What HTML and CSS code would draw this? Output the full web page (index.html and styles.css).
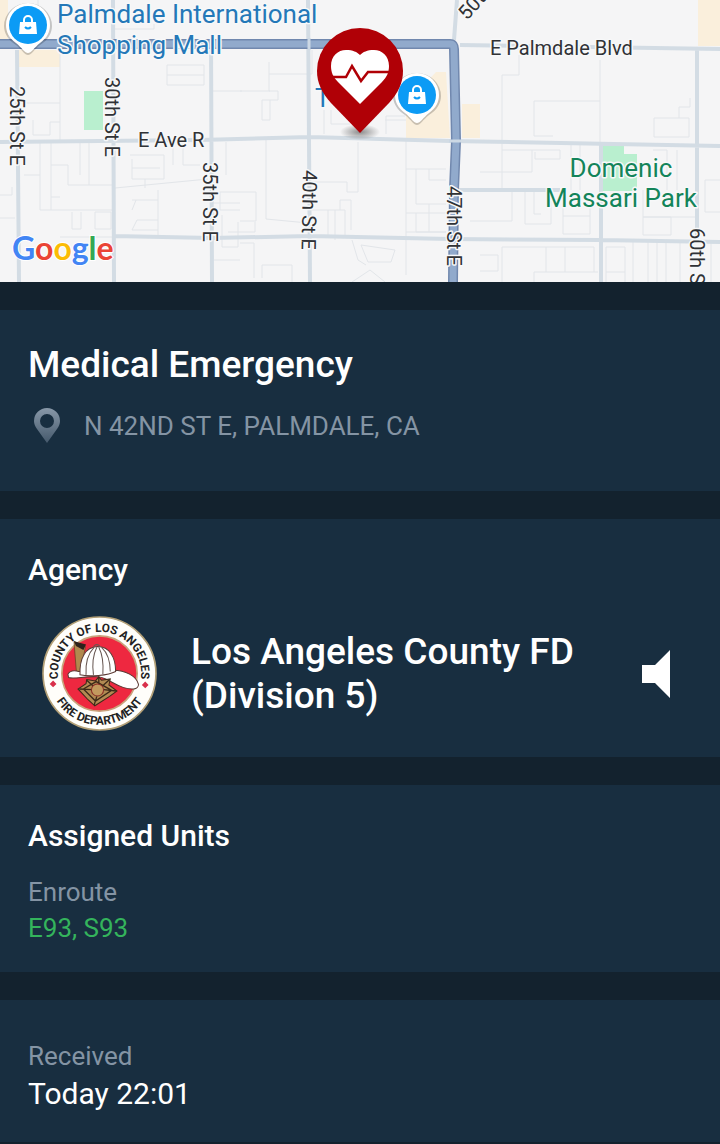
FILE: index.html
```html
<!DOCTYPE html>
<html lang="en">
<head>
<meta charset="utf-8">
<meta name="viewport" content="width=device-width, initial-scale=1">
<title>Medical Emergency</title>
<link rel="stylesheet" href="styles.css">
</head>
<body>
  <div class="map">
    <svg viewBox="0 0 720 282" role="img" aria-label="Map of the incident">
      <defs>
        <g id="shop-pin">
          <path class="pin-shadow" d="M0 30C-3 30 -6 25 -12 20C-20 15 -24 8 -24 1A24 23 0 0 1 24 1C24 8 20 15 12 20C6 25 3 30 0 30Z"/>
          <path fill="#fff" d="M0 28C-3 28 -6 23 -12 18C-19 13 -22 7 -22 0A22 22 0 0 1 22 0C22 7 19 13 12 18C6 23 3 28 0 28Z"/>
          <circle r="19" fill="#0c9bf5"/>
          <path fill="#fff" d="M-8 -3H8L9 9H-9Z"/>
          <path fill="none" stroke="#fff" stroke-width="2" d="M-4 -3V-5A4 4 0 0 1 4 -5V-3"/>
          <path fill="none" stroke="#0c9bf5" stroke-width="2" d="M-3 2Q0 5 3 2"/>
        </g>
        <radialGradient id="ground">
          <stop offset="0" stop-color="#444" stop-opacity=".6"/>
          <stop offset="1" stop-color="#444" stop-opacity="0"/>
        </radialGradient>
      </defs>

      <rect width="720" height="282" fill="#f5f5f6"/>

      <!-- shops and parks -->
      <path fill="#faefdc" d="M0 0H8V40H0ZM18 50H60V67H18ZM406 104L436 72H446L450 138H406ZM462 104H480V138H462ZM698 0H720V46H698Z"/>
      <path fill="#b9efcf" d="M84 91H103V130H84ZM602 145H624V154H637V191H602Z"/>

      <!-- small streets -->
      <path class="street" d="M60 50V140M20 103H60M33 120V135H50V122H60M40 142V210H112M51 142V210M24 175H40M51 165H68V185H112M80 142V175M89 142V185M51 197H60M72 212V229H81V212M95 229V212H111V229H95M60 237H112M0 195H12V187M0 218H15
        M38 0V39M113 29H154V24M167 65H204V85H167ZM167 75H204M213 91H242M130 155H164V179H132V159M132 168H160M145 179V188M115 188L208 179M158 190V235M132 200H158M132 210L136 200M132 230H158M132 230L137 220H158M173 142V165M183 142V165H200
        M226 142V175M213 192H240M220 192V210H240M213 203H240M222 215V247H238V222M228 232H255V222M214 260H240
        M312 50V74H269V91H278V100H262V120H270V100M240 91H270M269 62V74M324 110V134M331 110V124H350M385 120H406M386 134V116H405M266 140V219L308 223M358 142V192H347V182H310M240 192H256V221H240M312 210H328V235M328 210H345V235M340 210V200H351V230M335 240V210
        M406 140V275M406 169H446M416 169V204H446M429 169V180H446M406 213H446M416 213V232H446M429 204V232M406 232H446M352 240L358 260L366 265M361 245L395 250L391 262H368ZM240 243H254V278M262 278V265H292V282M352 282L370 270L385 282
        M519 55V75H502V190M600 60V145M534 101H600M534 101V136H553M654 118H689V137H654ZM690 98V107H679V118M502 150H560V159H535V152M480 172H532V150M571 145V190M580 145V190M470 221H512V192M525 192V224H551V192M534 192V214H541M563 206V234H590V206M563 216H590M653 150H667V190M677 150V190M643 190V235H671V217H643M643 217H698M720 180H705V212H720
        M480 255H498V271H480M502 247V282M502 247H594M546 247V272M565 247V272M594 247V272M534 282V272H598M606 247V282M606 247H625V282M606 272H625M633 242V282M648 242V282M657 242V282M666 242V282M680 242V282M711 242V282"/>

      <!-- main streets -->
      <path class="road" d="M17 50L19 282M113 0L114 282M211 40L212 282M308 0L310 282M0 142L200 140L310 137L450 141L720 146M113 236L212 238L310 236L450 239L600 240L720 242M450 190H560M460 45L720 49M454 40L457 0M601 145V282M697 50L697 240"/>
      <path class="highway highway-edge" d="M0 44H450Q454 44 454 49L456 141L454 190L453 282"/>
      <path class="highway" d="M0 44H450Q454 44 454 49L456 141L454 190L453 282"/>
      <path fill="none" stroke="#ccd8e4" stroke-width="3" d="M309 38V50M449 141H461"/>

      <!-- labels -->
      <g class="label">
        <text x="138" y="147">E Ave R</text>
        <text x="490" y="55">E Palmdale Blvd</text>
        <text transform="translate(10 86) rotate(90)">25th St E</text>
        <text transform="translate(105 77) rotate(90)">30th St E</text>
        <text transform="translate(203 162) rotate(90)">35th St E</text>
        <text transform="translate(303 170) rotate(91)">40th St E</text>
        <text transform="translate(447 186) rotate(90)">47th St E</text>
        <text transform="translate(690 228) rotate(90)">60th St E</text>
        <text transform="translate(467 21) rotate(-48)">50th St E</text>
      </g>
      <g class="label place">
        <text x="57" y="23">Palmdale International</text>
        <text x="57" y="54">Shopping Mall</text>
        <text x="315" y="107">T</text>
      </g>
      <g class="label park">
        <text x="621" y="177">Domenic</text>
        <text x="621" y="207">Massari Park</text>
      </g>

      <use href="#shop-pin" x="28" y="25"/>
      <use href="#shop-pin" x="417" y="95"/>

      <!-- incident pin -->
      <ellipse cx="360" cy="132" rx="20" ry="8" fill="url(#ground)"/>
      <path fill="#b00006" d="M360 133L331 103C322 93 317 83 317 71A43 43 0 0 1 403 71C403 83 398 93 389 103Z"/>
      <path fill="#fff" d="M360 104L338 82C333 77 331 72 331 66C331 56 338 50 346 50C353 50 357 52 360 55C363 52 367 50 374 50C382 50 389 56 389 66C389 72 387 77 382 82Z"/>
      <path fill="none" stroke="#b00006" stroke-width="2.5" d="M331 77H346L352 66L361 81L368 72H389"/>

      <text class="google" x="12" y="260"><tspan fill="#4285f4">G</tspan><tspan fill="#ea4335">o</tspan><tspan fill="#fbbc05">o</tspan><tspan fill="#4285f4">g</tspan><tspan fill="#34a853">l</tspan><tspan fill="#ea4335">e</tspan></text>
    </svg>
  </div>

  <main class="cards">
    <section class="card incident">
      <h1>Medical Emergency</h1>
      <div class="address">
        <svg class="address-icon" viewBox="0 0 26 36" aria-hidden="true">
          <defs>
            <linearGradient id="fade" x2="0" y2="1">
              <stop offset="0" stop-color="#8898a8"/>
              <stop offset="1" stop-color="#45596c"/>
            </linearGradient>
          </defs>
          <path fill="url(#fade)" fill-rule="evenodd" d="M13 35L3 21C1 18 0 16 0 13A13 13 0 0 1 26 13C26 16 25 18 23 21ZM13 6A7 7 0 0 0 13 20A7 7 0 0 0 13 6Z"/>
        </svg>
        <span>N 42ND ST E, PALMDALE, CA</span>
      </div>
    </section>

    <section class="card agency">
      <h2>Agency</h2>
      <div class="agency-row">
        <svg class="seal" viewBox="39 45 342 342" role="img" aria-label="County of Los Angeles Fire Department">
          <defs>
            <path id="arc-top" d="M93 257A124 124 0 1 1 327 257"/>
            <path id="arc-bottom" d="M66 263A151 151 0 0 0 354 263"/>
          </defs>
          <circle cx="210" cy="216" r="168" fill="#fffefa" stroke="#b3a077" stroke-width="5"/>
          <circle cx="210" cy="216" r="112" fill="#ee2840" stroke="#c9a37c" stroke-width="5"/>
          <text class="seal-text"><textPath href="#arc-top" startOffset="50%">COUNTY OF LOS ANGELES</textPath></text>
          <text class="seal-text"><textPath href="#arc-bottom" startOffset="50%">FIRE DEPARTMENT</textPath></text>
          <path fill="#d9304a" d="M72 237L82 247L72 257L62 247ZM346 240L356 250L346 260L336 250Z"/>
          <path fill="#b1894e" stroke="#5c4020" stroke-width="2" d="M134 120L168 136L152 222L142 220Z"/>
          <path fill="#2c211b" d="M134 120L170 130L162 146L140 134Z"/>
          <path fill="#fff" stroke="#5b3a35" stroke-width="3" d="M116 218C122 208 134 206 148 210L252 206C286 206 320 224 326 248C326 266 302 264 282 258C250 248 236 230 206 226C170 222 136 234 118 228Z"/>
          <path fill="#fff" stroke="#5b3a35" stroke-width="3" d="M152 220C150 170 168 138 204 136C240 136 258 168 258 210C236 222 180 226 152 220Z"/>
          <path fill="none" stroke="#675752" stroke-width="3" d="M194 138C174 158 168 190 170 220M202 138C190 162 188 190 192 220M208 138C220 162 222 190 220 218M216 138C236 156 242 180 242 210M192 136Q202 124 212 136"/>
          <path fill="#b28a52" stroke="#3c2a18" stroke-width="3" d="M208 226L216 236L242 232L238 250L262 268L240 284L196 312L176 294L146 262L170 246L172 234L198 238Z"/>
          <path fill="none" stroke="#3c2a18" stroke-width="4" d="M208 226V248M150 262L188 264M260 268L222 264M194 310L202 284M172 236L192 254M240 234L218 254M162 262L200 240L246 266L198 298Z"/>
          <circle cx="204" cy="265" r="18" fill="#c39a5e" stroke="#8a2c26" stroke-width="3"/>
        </svg>
        <p class="agency-name">Los Angeles County FD (Division 5)</p>
        <button class="listen" type="button" aria-label="Listen">
          <svg viewBox="0 0 28 48" aria-hidden="true"><path fill="#fff" d="M0 15H13L28 0V48L13 33H0Z"/></svg>
        </button>
      </div>
    </section>

    <section class="card units">
      <h2>Assigned Units</h2>
      <p class="muted">Enroute</p>
      <p class="enroute">E93, S93</p>
    </section>

    <section class="card received">
      <p class="muted">Received</p>
      <p class="time">Today 22:01</p>
    </section>
  </main>
</body>
</html>
```
FILE: styles.css
```css
* {
  box-sizing: border-box;
}

body {
  margin: 0;
  background-color: #13222e;
  color: #fff;
  font-family: Roboto, sans-serif;
  font-size: 26px;
  line-height: 36px;
}

h1, h2, p {
  margin: 0;
  font-weight: 500;
}

.map svg {
  display: block;
  width: 100%;
}

.street {
  fill: none;
  stroke: #e2e5e9;
  stroke-width: 1;
}

.road {
  fill: none;
  stroke: #d3dce4;
  stroke-width: 4;
}

.highway {
  fill: none;
  stroke: #91aacc;
  stroke-width: 7;
}

.highway-edge {
  stroke: #7188ae;
  stroke-width: 10;
}

.label {
  font-size: 20px;
  fill: #303236;
  stroke: #f7f8f9;
  stroke-width: 3px;
  stroke-linejoin: round;
  paint-order: stroke;
}

.place {
  font-size: 26px;
  fill: #2478b8;
}

.park {
  font-size: 26px;
  fill: #13845a;
  text-anchor: middle;
}

.pin-shadow {
  fill: #000;
  opacity: .2;
}

.google {
  font-family: Lato, sans-serif;
  font-size: 32px;
  font-weight: 700;
  stroke: #fff;
  stroke-width: 2px;
  paint-order: stroke;
}

.cards {
  display: flex;
  flex-direction: column;
  gap: 28px;
  padding: 28px 0 4px;
}

.card {
  padding: 33px 28px 28px;
  background-color: #182e40;
}

h1 {
  font-size: 37px;
  line-height: 44px;
}

h2 {
  font-size: 30px;
}

.incident {
  padding-bottom: 47px;
}

.address {
  display: flex;
  align-items: center;
  gap: 24px;
  margin-top: 21px;
  padding-left: 6px;
  color: #8494a4;
}

.address-icon {
  width: 26px;
  height: 36px;
}

.agency-row {
  display: flex;
  align-items: center;
  margin-top: 28px;
  padding: 0 22px 0 14px;
}

.seal {
  flex: none;
  width: 115px;
  height: 115px;
}

.seal-text {
  font-size: 35px;
  font-weight: 700;
  fill: #222;
  text-anchor: middle;
}

.agency-name {
  flex: 1;
  margin: 0 56px 0 34px;
  font-size: 37px;
  line-height: 44px;
}

.listen {
  flex: none;
  padding: 0;
  border: 0;
  background: none;
  cursor: pointer;
}

.listen svg {
  display: block;
  width: 28px;
  height: 48px;
}

.agency {
  padding-bottom: 26px;
}

.muted {
  color: #8494a4;
  font-weight: 400;
}

.units {
  padding-bottom: 26px;
}

.units .muted {
  margin-top: 20px;
}

.enroute {
  color: #34b45c;
  font-weight: 400;
}

.received {
  padding-top: 38px;
}

.time {
  font-size: 30px;
  font-weight: 400;
  line-height: 40px;
}
```
